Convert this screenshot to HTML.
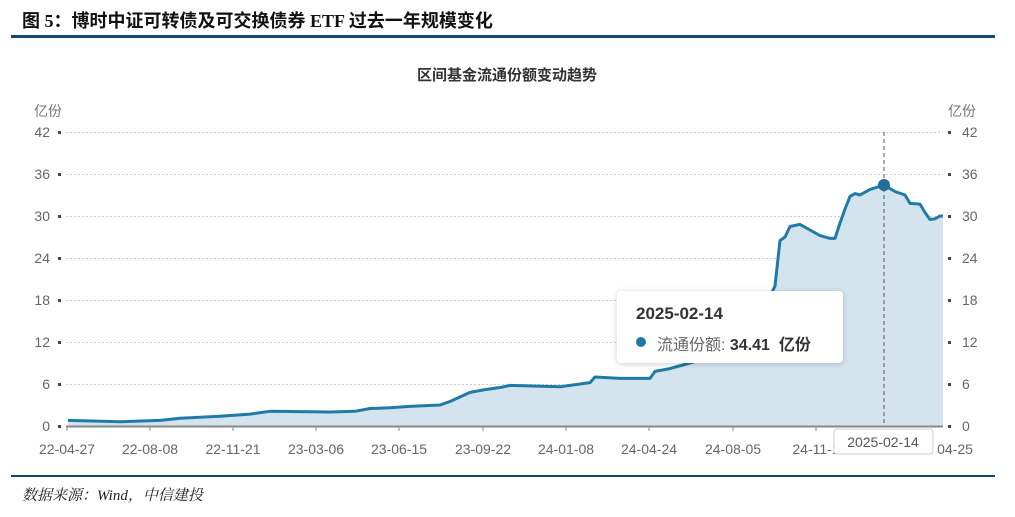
<!DOCTYPE html>
<html><head><meta charset="utf-8"><style>
html,body{margin:0;padding:0;background:#fff;width:1015px;height:517px;overflow:hidden;position:relative;font-family:"Liberation Sans","Noto Sans CJK SC",sans-serif}
.t{position:absolute;left:22px;top:7px;font-size:18px;font-weight:bold;color:#111;font-family:"Liberation Serif","Noto Sans CJK SC",serif}
.src{position:absolute;left:22px;top:484px;font-size:15px;font-style:italic;color:#222;font-family:"Liberation Serif","Noto Serif CJK SC",serif}
.tip{position:absolute;left:617px;top:291px;width:226px;height:72px;background:#fff;border-radius:4px;box-shadow:0 1px 6px rgba(0,0,0,.2)}
</style></head><body>
<div class="t">图 5：博时中证可转债及可交换债券 ETF 过去一年规模变化</div>
<div style="position:absolute;left:11px;top:35px;width:984px;height:3px;background:#0d4c74"></div>
<div style="position:absolute;left:11px;top:475px;width:984px;height:2px;background:#0d4c74"></div>
<div class="src">数据来源：Wind，中信建投</div>
<svg width="1015" height="517" style="position:absolute;left:0;top:0" font-family="Liberation Sans, Noto Sans CJK SC, sans-serif">
<text x="507" y="80" text-anchor="middle" font-size="15" font-weight="bold" fill="#333">区间基金流通份额变动趋势</text>
<text x="34" y="116" font-size="14" fill="#777">亿份</text>
<text x="948" y="116" font-size="14" fill="#777">亿份</text>
<g stroke="#ccc" stroke-dasharray="2,2">
<line x1="66" x2="943" y1="132.5" y2="132.5"/><line x1="66" x2="943" y1="174.5" y2="174.5"/><line x1="66" x2="943" y1="216.5" y2="216.5"/><line x1="66" x2="943" y1="258.5" y2="258.5"/><line x1="66" x2="943" y1="300.5" y2="300.5"/><line x1="66" x2="943" y1="342.5" y2="342.5"/><line x1="66" x2="943" y1="384.5" y2="384.5"/>
</g>
<g font-size="14" fill="#666" text-anchor="end">
<text x="50" y="137">42</text><text x="50" y="179">36</text><text x="50" y="221">30</text><text x="50" y="263">24</text><text x="50" y="305">18</text><text x="50" y="347">12</text><text x="50" y="389">6</text><text x="50" y="431">0</text>
</g>
<g font-size="14" fill="#666">
<text x="962" y="137">42</text><text x="962" y="179">36</text><text x="962" y="221">30</text><text x="962" y="263">24</text><text x="962" y="305">18</text><text x="962" y="347">12</text><text x="962" y="389">6</text><text x="962" y="431">0</text>
</g>
<g fill="#444">
<rect x="58" y="131" width="3" height="3"/><rect x="58" y="173" width="3" height="3"/><rect x="58" y="215" width="3" height="3"/><rect x="58" y="257" width="3" height="3"/><rect x="58" y="299" width="3" height="3"/><rect x="58" y="341" width="3" height="3"/><rect x="58" y="383" width="3" height="3"/><rect x="58" y="425" width="3" height="3"/>
<rect x="948" y="131" width="3" height="3"/><rect x="948" y="173" width="3" height="3"/><rect x="948" y="215" width="3" height="3"/><rect x="948" y="257" width="3" height="3"/><rect x="948" y="299" width="3" height="3"/><rect x="948" y="341" width="3" height="3"/><rect x="948" y="383" width="3" height="3"/><rect x="948" y="425" width="3" height="3"/>
</g>
<path d="M68,420.4 L120,421.8 L160,420.4 L180,418.3 L220,416.2 L250,414.1 L270,411.3 L330,412 L355,411.3 L370,408.5 L390,407.8 L410,406.4 L440,405 L450,401.5 L470,392.4 L485,389.6 L500,387.5 L510,385.4 L560,386.8 L580,384 L590,382.6 L595,377 L620,378.4 L650,378.4 L655,371.4 L670,368.6 L690,363 L710,357.4 L730,342 L750,328 L760,310.5 L770,296.5 L775,286 L780,240.5 L785,237 L790,226.5 L800,224.4 L810,230 L820,235.6 L830,238.4 L835,238.4 L840,223 L845,209 L850,196.4 L855,193.6 L860,195 L870,189.4 L884,185.1 L895,191.5 L905,195 L910,203.4 L920,204.1 L925,212.5 L930,219.5 L935,218.8 L940,216 L943,216 L943,426 L68,426 Z" fill="#d3e4ef"/>
<path d="M68,420.4 L120,421.8 L160,420.4 L180,418.3 L220,416.2 L250,414.1 L270,411.3 L330,412 L355,411.3 L370,408.5 L390,407.8 L410,406.4 L440,405 L450,401.5 L470,392.4 L485,389.6 L500,387.5 L510,385.4 L560,386.8 L580,384 L590,382.6 L595,377 L620,378.4 L650,378.4 L655,371.4 L670,368.6 L690,363 L710,357.4 L730,342 L750,328 L760,310.5 L770,296.5 L775,286 L780,240.5 L785,237 L790,226.5 L800,224.4 L810,230 L820,235.6 L830,238.4 L835,238.4 L840,223 L845,209 L850,196.4 L855,193.6 L860,195 L870,189.4 L884,185.1 L895,191.5 L905,195 L910,203.4 L920,204.1 L925,212.5 L930,219.5 L935,218.8 L940,216 L943,216" fill="none" stroke="#1f7aa8" stroke-width="3" stroke-linejoin="round"/>
<line x1="884" x2="884" y1="132" y2="426" stroke="#555" stroke-dasharray="4,3"/>
<circle cx="884" cy="185" r="6" fill="#1f6f99"/>
<line x1="66" x2="943" y1="426.5" y2="426.5" stroke="#888" stroke-width="2"/>
<g stroke="#888"><line x1="67" x2="67" y1="426" y2="431"/><line x1="150" x2="150" y1="426" y2="431"/><line x1="233" x2="233" y1="426" y2="431"/><line x1="316" x2="316" y1="426" y2="431"/><line x1="399" x2="399" y1="426" y2="431"/><line x1="483" x2="483" y1="426" y2="431"/><line x1="566" x2="566" y1="426" y2="431"/><line x1="649" x2="649" y1="426" y2="431"/><line x1="733" x2="733" y1="426" y2="431"/><line x1="816" x2="816" y1="426" y2="431"/></g>
<g font-size="14" fill="#666" text-anchor="middle">
<text x="67" y="454">22-04-27</text><text x="150" y="454">22-08-08</text><text x="233" y="454">22-11-21</text><text x="316" y="454">23-03-06</text><text x="399" y="454">23-06-15</text><text x="483" y="454">23-09-22</text><text x="566" y="454">24-01-08</text><text x="649" y="454">24-04-24</text><text x="733" y="454">24-08-05</text><text x="816" y="454">24-11-1</text><text x="955" y="454">04-25</text>
</g>
<rect x="834" y="429" width="99" height="25" rx="3" fill="#fff" stroke="#ccc"/>
<text x="883" y="447" text-anchor="middle" font-size="14" fill="#555">2025-02-14</text>
</svg>
<div class="tip">
<div style="position:absolute;left:19px;top:13px;font-size:17px;font-weight:bold;color:#333">2025-02-14</div>
<div style="position:absolute;left:19px;top:46px;width:10px;height:10px;border-radius:5px;background:#1f7aa8"></div>
<div style="position:absolute;left:40px;top:40px;font-size:16px;color:#666;white-space:nowrap">流通份额: <b style="color:#333">34.41 &nbsp;亿份</b></div>
</div>
</body></html>
